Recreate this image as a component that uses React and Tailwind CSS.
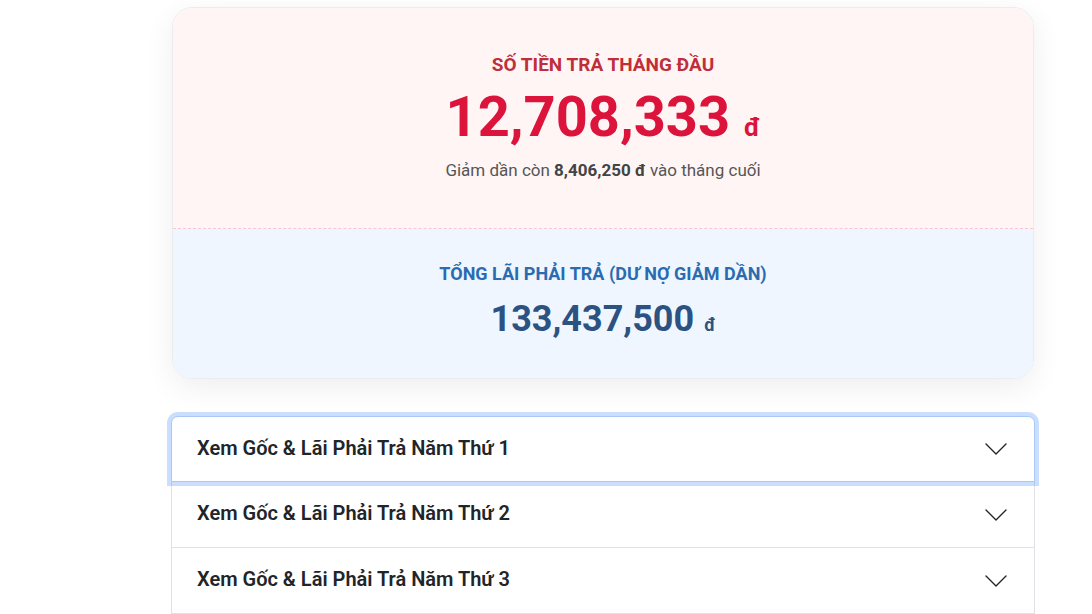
const years = [1, 2, 3];

function SummaryCard() {
  return (
    <section className="w-[862px] overflow-hidden rounded-[20px] border border-[#ececec] shadow-[0_8px_30px_rgba(0,0,0,0.07)]">
      <div className="flex h-[221px] flex-col items-center border-b border-dashed border-[#f6c6d2] bg-[#fff5f5] pt-[45px]">
        <p className="text-[19px] font-bold leading-[24px] text-[#bf2f3a]">SỐ TIỀN TRẢ THÁNG ĐẦU</p>
        <p className="mt-[7px] flex items-baseline text-[#dc143c]">
          <span className="text-[56px] font-bold leading-[66px]">12,708,333</span>
          <span className="ml-[14px] text-[26px] font-bold">đ</span>
        </p>
        <p className="mt-[9px] text-[17px] leading-[22px] text-[#555]">
          Giảm dần còn <b className="font-bold text-[#444]">8,406,250 đ</b> vào tháng cuối
        </p>
      </div>
      <div className="flex h-[149px] flex-col items-center bg-[#eff6ff] pt-[33px]">
        <p className="text-[18px] font-bold leading-[24px] text-[#2b6cb0]">TỔNG LÃI PHẢI TRẢ (DƯ NỢ GIẢM DẦN)</p>
        <p className="mt-[11px] flex items-baseline text-[#2c5282]">
          <span className="text-[36px] font-bold leading-[44px]">133,437,500</span>
          <span className="ml-[10px] text-[18px] font-bold">đ</span>
        </p>
      </div>
    </section>
  );
}

function Chevron() {
  return (
    <svg width="22" height="12" viewBox="0 0 22 12" fill="none" stroke="#212529" strokeWidth="1.4" strokeLinecap="round" strokeLinejoin="round">
      <polyline points="1,1 11,11 21,1" />
    </svg>
  );
}

function AccordionItem({ year, focused }) {
  return (
    <button
      type="button"
      className={
        focused
          ? 'relative z-10 flex h-[66px] w-full items-center justify-between rounded-t-[7px] border border-[#a9c8f5] bg-white pl-[25px] pr-[27px] text-left shadow-[0_0_0_4px_rgba(13,110,253,0.22)]'
          : 'flex h-[66px] w-full items-center justify-between border-x border-b border-[#dee2e6] bg-white pl-[25px] pr-[27px] text-left'
      }
    >
      <span className="-mt-[3px] text-[20px] font-semibold text-[#212529]">Xem Gốc &amp; Lãi Phải Trả Năm Thứ {year}</span>
      <Chevron />
    </button>
  );
}

export default function App() {
  return (
    <div className="min-h-[614px] bg-white pt-[7px] font-['Roboto',sans-serif]">
      <div className="ml-[172px]">
        <SummaryCard />
      </div>
      <div className="ml-[171px] mt-[37px] w-[864px]">
        {years.map((year) => (
          <AccordionItem key={year} year={year} focused={year === 1} />
        ))}
      </div>
    </div>
  );
}
